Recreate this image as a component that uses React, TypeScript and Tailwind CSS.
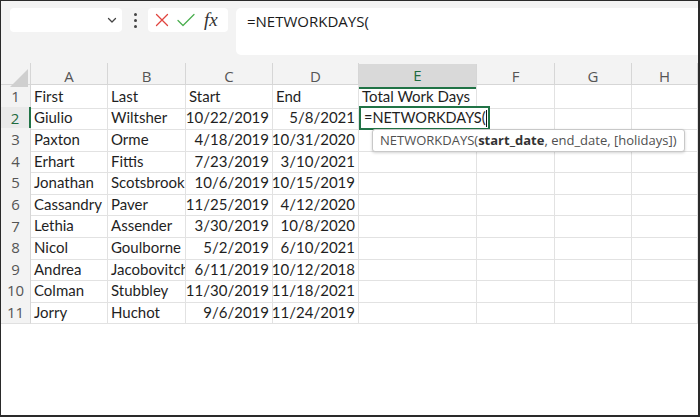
import React from "react";

const cols = ["A", "B", "C", "D", "E", "F", "G", "H"];
const rows: string[][] = [
  ["First", "Last", "Start", "End", "Total Work Days"],
  ["Giulio", "Wiltsher", "10/22/2019", "5/8/2021", ""],
  ["Paxton", "Orme", "4/18/2019", "10/31/2020", ""],
  ["Erhart", "Fittis", "7/23/2019", "3/10/2021", ""],
  ["Jonathan", "Scotsbrook", "10/6/2019", "10/15/2019", ""],
  ["Cassandry", "Paver", "11/25/2019", "4/12/2020", ""],
  ["Lethia", "Assender", "3/30/2019", "10/8/2020", ""],
  ["Nicol", "Goulborne", "5/2/2019", "6/10/2021", ""],
  ["Andrea", "Jacobovitch", "6/11/2019", "10/12/2018", ""],
  ["Colman", "Stubbley", "11/30/2019", "11/18/2021", ""],
  ["Jorry", "Huchot", "9/6/2019", "11/24/2019", ""],
];

const gridCols = "grid grid-cols-[30px_77px_78px_87px_86px_118px_78px_77px_1fr]";
const cellFont = { fontFamily: 'Lato, "Open Sans", sans-serif' };

export default function App() {
  return (
    <div
      className="relative w-[700px] h-[417px] overflow-hidden bg-white border-l border-t border-r-2 border-b-2 border-[#2a2a2a] text-[#1f1f1f]"
      style={{ fontFamily: '"Open Sans", "Noto Sans", sans-serif' }}
    >
      {/* Toolbar */}
      <div className="h-[62px] bg-[#f3f3f3] flex items-start pt-[7px] pl-[9px] gap-0">
        <div className="w-[112px] h-[24px] bg-white rounded-[4px] flex items-center justify-end pr-[4px]">
          <svg width="12" height="12" viewBox="0 0 12 12" fill="none">
            <path d="M2.5 4.5 L6 8 L9.5 4.5" stroke="#444" strokeWidth="1.3" strokeLinecap="round" strokeLinejoin="round" />
          </svg>
        </div>
        <div className="w-[26px] h-[24px] flex flex-col items-center justify-center gap-[3px]">
          <span className="block w-[3px] h-[3px] rounded-full bg-[#444]" />
          <span className="block w-[3px] h-[3px] rounded-full bg-[#444]" />
          <span className="block w-[3px] h-[3px] rounded-full bg-[#444]" />
        </div>
        <div className="w-[80px] h-[24px] bg-white rounded-[4px] flex items-center pl-[6px] gap-[6px]">
          <svg width="16" height="16" viewBox="0 0 16 16" fill="none">
            <path d="M2.5 2.5 L13.5 13.5 M13.5 2.5 L2.5 13.5" stroke="#e0443e" strokeWidth="1.3" strokeLinecap="round" />
          </svg>
          <svg width="20" height="16" viewBox="0 0 20 16" fill="none">
            <path d="M2 8.5 L7 13.5 L18 2.5" stroke="#4caf50" strokeWidth="1.3" strokeLinecap="round" strokeLinejoin="round" />
          </svg>
          <span
            className="italic text-[19px] leading-none text-[#333] ml-[2px] -mt-[2px]"
            style={{ fontFamily: '"Liberation Serif", "DejaVu Serif", serif' }}
          >
            fx
          </span>
        </div>
        <div className="ml-[8px] flex-1 h-[47px] bg-white rounded-l-[5px] pl-[11px] pt-[2px] text-[15px] text-[#1a1a1a]">
          =NETWORKDAYS(
        </div>
      </div>

      {/* Column header row */}
      <div className={`${gridCols} h-[22px] bg-[#f3f3f3] border-b border-[#d6d6d6]`}>
        <div className="relative border-r border-[#d6d6d6]">
          <svg className="absolute right-[2px] bottom-[2px]" width="18" height="18" viewBox="0 0 18 18">
            <path d="M18 0 L18 18 L0 18 Z" fill="#cfcfcf" />
          </svg>
        </div>
        {cols.map((c) => (
          <div
            key={c}
            className={
              c === "E"
                ? "mt-[1px] bg-[#d9d9d9] border-b-2 border-[#217346] border-r border-r-[#d6d6d6] flex items-center justify-center text-[15px] text-[#1e6b3f]"
                : "border-r border-[#d6d6d6] flex items-center justify-center text-[15px] text-[#555]"
            }
          >
            {c}
          </div>
        ))}
      </div>

      {/* Rows */}
      {rows.map((r, i) => (
        <div key={i} className={`${gridCols} h-[21.6px]`}>
          <div
            className={
              i === 1
                ? "bg-[#eaeaea] border-r-2 border-r-[#217346] border-b border-[#e0e0e0] flex items-center justify-center text-[15px] text-[#1e6b3f]"
                : "bg-[#f3f3f3] border-r border-[#d6d6d6] border-b border-b-[#e0e0e0] flex items-center justify-center text-[15px] text-[#555]"
            }
          >
            {i + 1}
          </div>
          {cols.map((c, j) => {
            const v = r[j] ?? "";
            const isDate = i > 0 && (j === 2 || j === 3);
            return (
              <div
                key={c}
                style={cellFont}
                className={`border-r border-b border-[#e2e2e2] flex items-center overflow-hidden whitespace-nowrap text-[15px] leading-none ${
                  isDate ? "justify-end pr-[3px]" : "pl-[3px]"
                }`}
              >
                {v}
              </div>
            );
          })}
        </div>
      ))}

      {/* Active cell editor */}
      <div
        style={cellFont}
        className="absolute left-[358px] top-[105px] min-w-[124px] h-[24px] border-2 border-[#217346] bg-white flex items-center pl-[3px] pr-[1px] text-[14.5px] whitespace-nowrap"
      >
        <span>=NETWORKDAYS(</span>
        <span className="w-px h-[17px] bg-[#111]" />
      </div>

      {/* Tooltip */}
      <div className="absolute left-[371px] top-[128px] h-[23px] px-[7px] bg-white border border-[#c8c8c8] rounded-[3px] shadow-[0_1px_3px_rgba(0,0,0,0.18)] flex items-center text-[13px] text-[#505050] whitespace-nowrap">
        NETWORKDAYS(<b className="font-bold text-[#333]">start_date</b>, end_date, [holidays])
      </div>
    </div>
  );
}
